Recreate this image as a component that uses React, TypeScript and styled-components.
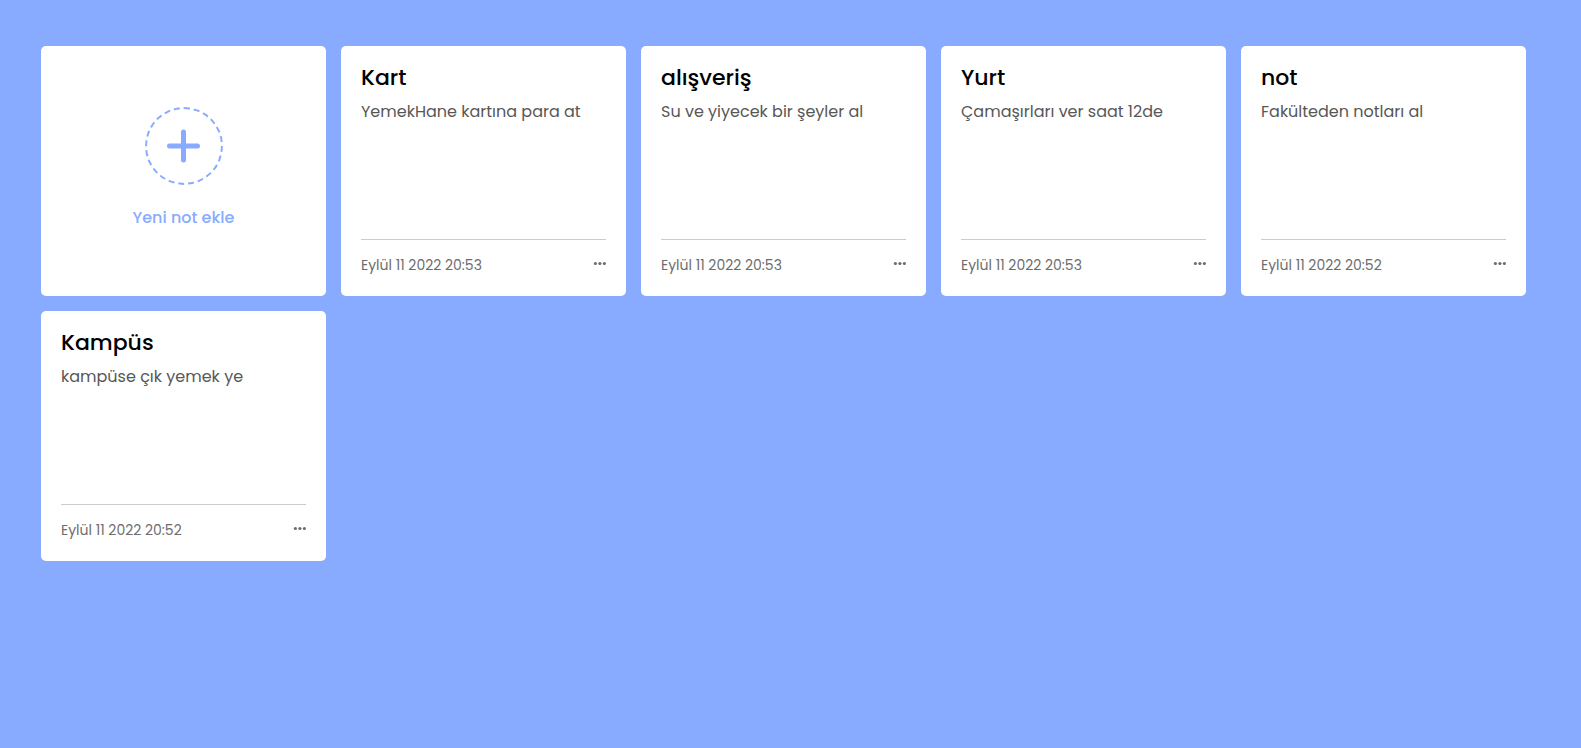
import React from "react";
import styled, { createGlobalStyle } from "styled-components";

const GlobalStyle = createGlobalStyle`
  * {
    box-sizing: border-box;
    margin: 0;
    padding: 0;
    font-family: Poppins, Inter, "Noto Sans", sans-serif;
  }

  body {
    background: #88abff;
  }
`;

const Wrapper = styled.main`
  display: grid;
  grid-template-columns: repeat(auto-fill, 285px);
  gap: 15px;
  padding: 46px 41px;
`;

const AddCard = styled.button`
  display: flex;
  flex-direction: column;
  align-items: center;
  justify-content: center;
  gap: 21px;
  height: 250px;
  padding-bottom: 5px;
  border: 0;
  border-radius: 5px;
  background: #fff;
  color: #88abff;
  font-size: 16px;
  font-weight: 500;
  line-height: 24px;
  cursor: pointer;
`;

const PlusCircle = styled.span`
  display: flex;
  align-items: center;
  justify-content: center;
  width: 78px;
  height: 78px;
  border: 2px dashed #88abff;
  border-radius: 50%;
`;

const NoteCard = styled.article`
  display: flex;
  flex-direction: column;
  justify-content: space-between;
  height: 250px;
  padding: 15px 20px 20px;
  border-radius: 5px;
  background: #fff;
`;

const Title = styled.h2`
  color: #000;
  font-size: 22px;
  font-weight: 500;
  line-height: 33px;
`;

const Description = styled.p`
  margin-top: 6px;
  color: #575757;
  font-size: 16px;
  font-weight: 400;
  line-height: 24px;
`;

const Footer = styled.footer`
  display: flex;
  align-items: center;
  justify-content: space-between;
  padding-top: 15px;
  border-top: 1px solid #ccc;
  color: #6d6d6d;
`;

const NoteDate = styled.time`
  font-size: 14px;
  font-weight: 400;
  line-height: 21px;
`;

const MenuButton = styled.button`
  display: flex;
  padding-bottom: 4px;
  border: 0;
  background: none;
  color: inherit;
  cursor: pointer;
`;

type Note = { title: string; description: string; date: string };

const notes: Note[] = [
  { title: "Kart", description: "YemekHane kartına para at", date: "Eylül 11 2022 20:53" },
  { title: "alışveriş", description: "Su ve yiyecek bir şeyler al", date: "Eylül 11 2022 20:53" },
  { title: "Yurt", description: "Çamaşırları ver saat 12de", date: "Eylül 11 2022 20:53" },
  { title: "not", description: "Fakülteden notları al", date: "Eylül 11 2022 20:52" },
  { title: "Kampüs", description: "kampüse çık yemek ye", date: "Eylül 11 2022 20:52" },
];

const PlusIcon = () => (
  <svg width="34" height="34" viewBox="0 0 34 34" aria-hidden="true">
    <path d="M16.5 3v28M2.5 17h28" stroke="currentColor" strokeWidth="5" strokeLinecap="round" />
  </svg>
);

const DotsIcon = () => (
  <svg width="13" height="15" viewBox="0 0 13 15" fill="currentColor" aria-hidden="true">
    <circle cx="2.4" cy="7.5" r="1.6" />
    <circle cx="6.9" cy="7.5" r="1.6" />
    <circle cx="11.4" cy="7.5" r="1.6" />
  </svg>
);

export default function App() {
  return (
    <>
      <GlobalStyle />
      <Wrapper>
        <AddCard type="button">
          <PlusCircle>
            <PlusIcon />
          </PlusCircle>
          <span>Yeni not ekle</span>
        </AddCard>
        {notes.map((note) => (
          <NoteCard key={note.title}>
            <div>
              <Title>{note.title}</Title>
              <Description>{note.description}</Description>
            </div>
            <Footer>
              <NoteDate>{note.date}</NoteDate>
              <MenuButton type="button" aria-label="Menü">
                <DotsIcon />
              </MenuButton>
            </Footer>
          </NoteCard>
        ))}
      </Wrapper>
    </>
  );
}
